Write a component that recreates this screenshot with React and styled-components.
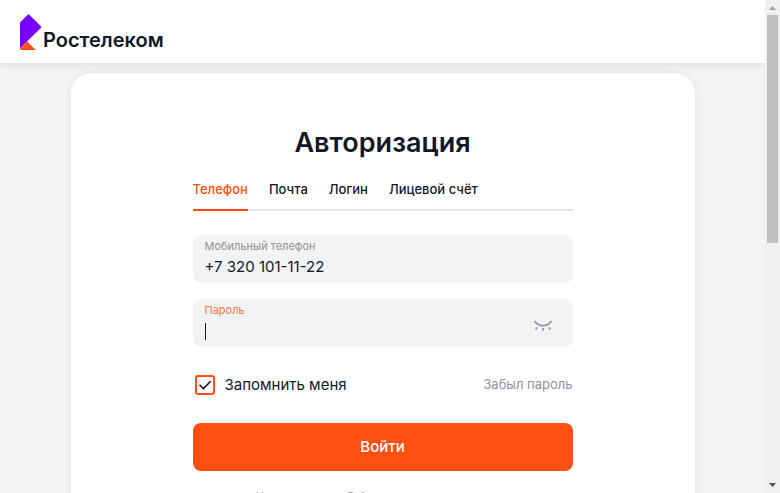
import React, { useState } from "react";
import styled, { createGlobalStyle } from "styled-components";

const ink = "#101828";
const orange = "#ff4f12";
const grey = "#8f92a0";

const GlobalStyle = createGlobalStyle`
  *, *::before, *::after { box-sizing: border-box; }
  body {
    margin: 0;
    overflow: hidden;
    background: #f3f3f4;
    color: ${ink};
    font-family: Inter, "Noto Sans", sans-serif;
  }
  input, button { font: inherit; color: inherit; }
`;

const Shell = styled.div`
  display: flex;
  height: 100vh;
`;

const Page = styled.div`
  flex: 1;
  min-width: 0;
  overflow: hidden;
`;

const Header = styled.header`
  display: flex;
  align-items: center;
  height: 63px;
  padding: 0 20px;
  background: #fff;
  box-shadow: 0 0 8px rgba(16, 24, 40, 0.14);
`;

const Brand = styled.a`
  display: flex;
  align-items: flex-end;
  gap: 1px;
  color: ${ink};
  text-decoration: none;
`;

const BrandName = styled.span`
  font-size: 20px;
  font-weight: 600;
  line-height: 20px;
`;

const Card = styled.main`
  display: flex;
  justify-content: center;
  max-width: 624px;
  margin: 10px auto;
  padding: 50px 24px 48px;
  border-radius: 20px;
  background: #fff;
  box-shadow: 0 0 8px rgba(16, 24, 40, 0.08);
`;

const Form = styled.form`
  display: flex;
  flex-direction: column;
  width: 100%;
  max-width: 380px;
`;

const Title = styled.h1`
  margin: 0;
  font-size: 27px;
  font-weight: 600;
  line-height: 40px;
  text-align: center;
`;

const Tabs = styled.div`
  display: flex;
  gap: 21px;
  margin-top: 8px;
  box-shadow: inset 0 -2px #e5e5e5;
`;

const Tab = styled.button`
  height: 40px;
  padding: 0 0 2px;
  border: 0;
  border-bottom: 2px solid ${(p) => (p.$active ? orange : "transparent")};
  background: none;
  color: ${(p) => (p.$active ? orange : ink)};
  font-size: 13px;
  font-weight: 500;
  cursor: pointer;
`;

const Fields = styled.div`
  display: grid;
  gap: 16px;
  margin-top: 24px;
`;

const Field = styled.div`
  display: flex;
  align-items: flex-start;
  height: 48px;
  padding: 3px 20px 0 12px;
  border-radius: 8px;
  background: #f1f3f5;
`;

const FieldBody = styled.div`
  flex: 1;
  min-width: 0;
`;

const FieldLabel = styled.label`
  display: block;
  color: ${(p) => (p.$active ? "#ff7245" : "#9b8e90")};
  font-size: 11px;
  line-height: 16px;
`;

const InputRow = styled.div`
  display: flex;
  align-items: center;
  height: 24px;
`;

const Caret = styled.span`
  width: 1px;
  height: 17px;
  margin-top: 2px;
  background: ${ink};
`;

const TextInput = styled.input`
  flex: 1;
  min-width: 0;
  padding: 0;
  border: 0;
  outline: 0;
  background: none;
  caret-color: transparent;
  font-size: 15px;
`;

const IconButton = styled.button`
  display: flex;
  align-self: center;
  padding: 0;
  border: 0;
  background: none;
  color: ${grey};
  cursor: pointer;
`;

const Options = styled.div`
  display: flex;
  align-items: center;
  justify-content: space-between;
  height: 24px;
  margin-top: 25px;
`;

const Remember = styled.label`
  display: flex;
  align-items: center;
  gap: 10px;
  padding-left: 2px;
  font-size: 15px;
  cursor: pointer;
`;

const CheckWrap = styled.span`
  display: grid;
  margin-top: 2px;
  > * { grid-area: 1 / 1; }
  svg { pointer-events: none; }
  input:not(:checked) + svg { visibility: hidden; }
`;

const CheckInput = styled.input`
  appearance: none;
  width: 20px;
  height: 20px;
  margin: 0;
  border: 2px solid ${orange};
  border-radius: 3px;
`;

const Forgot = styled.a`
  color: ${grey};
  font-size: 13px;
  text-decoration: none;
`;

const Submit = styled.button`
  height: 48px;
  margin-top: 27px;
  padding: 0 0 2px;
  border: 0;
  border-radius: 8px;
  background: ${orange};
  color: #fff;
  font-size: 15px;
  font-weight: 500;
  cursor: pointer;
`;

const Terms = styled.p`
  margin: 17px 0 0;
  color: ${grey};
  font-size: 10px;
  line-height: 16px;
  text-align: center;
`;

const Scrollbar = styled.div`
  display: flex;
  flex-direction: column;
  align-items: center;
  width: 15px;
  background: #f0f0f0;
`;

const Arrow = styled.svg`
  flex: none;
  width: 15px;
  height: 15px;
`;

const Track = styled.div`
  flex: 1;
  width: 11px;
`;

const Thumb = styled.div`
  height: 49.3%;
  background: #c1c1c1;
`;

const tabs = ["Телефон", "Почта", "Логин", "Лицевой счёт"];

export default function App() {
  const [tab, setTab] = useState(tabs[0]);
  return (
    <>
      <GlobalStyle />
      <Shell>
        <Page>
          <Header>
            <Brand href="#">
              <svg width="22" height="37" viewBox="0 0 22 37" aria-hidden="true">
                <path d="M8.5 1 21.7 14 0 35.500V9.5Z" fill="#7700ff" />
                <path d="M7.2 28.5 15.7 37H1Q0 37 0 35.8Z" fill={orange} />
              </svg>
              <BrandName>Ростелеком</BrandName>
            </Brand>
          </Header>
          <Card>
            <Form onSubmit={(e) => e.preventDefault()}>
              <Title>Авторизация</Title>
              <Tabs role="tablist">
                {tabs.map((name) => (
                  <Tab
                    key={name}
                    type="button"
                    role="tab"
                    aria-selected={tab === name}
                    $active={tab === name}
                    onClick={() => setTab(name)}
                  >
                    {name}
                  </Tab>
                ))}
              </Tabs>
              <Fields>
                <Field>
                  <FieldBody>
                    <FieldLabel htmlFor="phone">Мобильный телефон</FieldLabel>
                    <InputRow>
                      <TextInput id="phone" type="tel" defaultValue="+7 320 101-11-22" />
                    </InputRow>
                  </FieldBody>
                </Field>
                <Field>
                  <FieldBody>
                    <FieldLabel htmlFor="password" $active>Пароль</FieldLabel>
                    <InputRow>
                      <Caret />
                      <TextInput id="password" type="password" />
                    </InputRow>
                  </FieldBody>
                  <IconButton type="button" aria-label="Показать пароль">
                    <svg width="20" height="14" viewBox="0 0 20 14" fill="none" stroke="currentColor" strokeWidth="1.7">
                      <path d="M1.500 3Q5 7.700 10 7.700T18.500 3" />
                      <path d="M3.900 9.300 2.800 11.500M10 10V12.800M16.100 9.300 17.200 11.500" />
                    </svg>
                  </IconButton>
                </Field>
              </Fields>
              <Options>
                <Remember>
                  <CheckWrap>
                    <CheckInput type="checkbox" defaultChecked />
                    <svg width="20" height="20" viewBox="0 0 20 20" fill="none" stroke={ink} strokeWidth="1.6">
                      <path d="M4.500 9.700 8.400 13.600 15.700 6.300" />
                    </svg>
                  </CheckWrap>
                  Запомнить меня
                </Remember>
                <Forgot href="#">Забыл пароль</Forgot>
              </Options>
              <Submit type="submit">Войти</Submit>
              <Terms>Нажимая кнопку «Войти», вы принимаете условия:</Terms>
            </Form>
          </Card>
        </Page>
        <Scrollbar aria-hidden="true">
          <Arrow viewBox="0 0 15 15"><path d="M4 10 7.500 6 11 10Z" fill="#a3a3a3" /></Arrow>
          <Track><Thumb /></Track>
          <Arrow viewBox="0 0 15 15"><path d="M4 5H11L7.500 9Z" fill="#505050" /></Arrow>
        </Scrollbar>
      </Shell>
    </>
  );
}
